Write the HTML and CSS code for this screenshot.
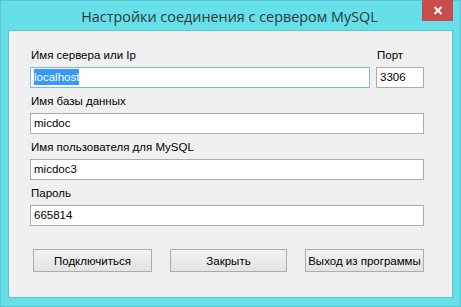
FILE: index.html
```html
<!DOCTYPE html>
<html lang="ru">
<head>
<meta charset="utf-8">
<title>Настройки соединения с сервером MySQL</title>
<link rel="stylesheet" href="styles.css">
</head>
<body>
<div class="window">
  <div class="titlebar">
    <span class="title">Настройки соединения с сервером MySQL</span>
    <button class="close" aria-label="Закрыть">
      <svg width="10" height="9" viewBox="0 0 10 9"><path d="M1.5 1 L8.5 8 M8.5 1 L1.5 8" stroke="#fff" stroke-width="2" fill="none"/></svg>
    </button>
  </div>
  <div class="client">
    <div class="grid">
      <label class="lbl">Имя сервера или Ip</label>
      <label class="lbl">Порт</label>
      <div class="field focused"><span class="sel">localhost</span></div>
      <div class="field">3306</div>
    </div>
    <div class="row">
      <label class="lbl">Имя базы данных</label>
      <div class="field">micdoc</div>
    </div>
    <div class="row">
      <label class="lbl">Имя пользователя для MySQL</label>
      <div class="field">micdoc3</div>
    </div>
    <div class="row">
      <label class="lbl">Пароль</label>
      <div class="field">665814</div>
    </div>
    <div class="buttons">
      <button class="btn">Подключиться</button>
      <button class="btn">Закрыть</button>
      <button class="btn">Выход из программы</button>
    </div>
  </div>
</div>
</body>
</html>
```

FILE: styles.css
```css
html, body {
  margin: 0;
  padding: 0;
  width: 461px;
  height: 307px;
  overflow: hidden;
}
.window {
  box-sizing: border-box;
  width: 461px;
  height: 307px;
  background: #66dfe8;
  border: 1px solid #55c9d2;
  display: flex;
  flex-direction: column;
  position: relative;
  font-family: "Liberation Sans", Arial, sans-serif;
}
.titlebar {
  height: 29px;
  display: flex;
  align-items: center;
  justify-content: center;
}
.title {
  font-family: "Open Sans", "Noto Sans", sans-serif;
  font-size: 14.4px;
  color: #2c3a3c;
  margin-top: 1px;
  margin-left: -2px;
}
.close {
  position: absolute;
  top: -1px;
  right: 7px;
  width: 31px;
  height: 21px;
  background: #c84c4b;
  border: none;
  padding: 0;
  display: flex;
  align-items: center;
  justify-content: center;
}
.client {
  margin: 0 7px 8px 7px;
  flex: 1;
  background: #f0f0f0;
  border: 1px solid #58c8d0;
  padding: 17px 28px 0 21px;
  display: flex;
  flex-direction: column;
}
.grid {
  display: grid;
  grid-template-columns: 1fr 48px;
  column-gap: 6px;
  row-gap: 5px;
}
.row {
  display: flex;
  flex-direction: column;
  gap: 5px;
  margin-top: 6px;
}
.lbl {
  font-size: 11.5px;
  line-height: 14px;
  color: #000;
  padding-left: 1px;
}
.field {
  box-sizing: border-box;
  height: 21px;
  background: #fff;
  border: 1px solid #acacac;
  font-size: 11.5px;
  line-height: 19px;
  padding-left: 3px;
  color: #000;
}
.field.focused {
  border-color: #7eb4ea;
}
.sel {
  background: #3399ff;
  color: #fff;
  padding: 2px 0;
}
.buttons {
  display: flex;
  justify-content: space-between;
  margin-top: 23px;
  padding: 0 0 0 3px;
}
.btn {
  box-sizing: border-box;
  width: 119px;
  height: 23px;
  font-family: "Liberation Sans", Arial, sans-serif;
  font-size: 11.5px;
  white-space: nowrap;
  color: #000;
  background: linear-gradient(#f2f2f2, #e3e3e3);
  border: 1px solid #acacac;
  padding: 0;
}
.btn:nth-child(2) { width: 117px; }
```
